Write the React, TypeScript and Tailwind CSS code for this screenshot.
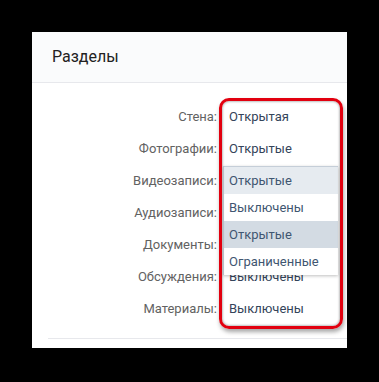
import React from "react";

const rows: { label: string; value: string }[] = [
  { label: "Стена:", value: "Открытая" },
  { label: "Фотографии:", value: "Открытые" },
  { label: "Видеозаписи:", value: "" },
  { label: "Аудиозаписи:", value: "" },
  { label: "Документы:", value: "" },
  { label: "Обсуждения:", value: "Выключены" },
  { label: "Материалы:", value: "Выключены" },
];

const items: { text: string; bg: string }[] = [
  { text: "Открытые", bg: "bg-[#e6ebf0]" },
  { text: "Выключены", bg: "bg-white" },
  { text: "Открытые", bg: "bg-[#d3dbe3]" },
  { text: "Ограниченные", bg: "bg-white" },
];

export default function App() {
  return (
    <div
      className="w-[379px] h-[382px] bg-black pt-[32px] pl-[32px]"
      style={{ fontFamily: "Roboto, 'Open Sans', sans-serif" }}
    >
      <div className="relative w-[315px] h-[316px] bg-white flex flex-col">
        <div className="h-[51px] bg-[#fafbfc] border-b border-[#e7e8ec] flex items-center pl-[20px] text-[16px] text-[#222]">
          Разделы
        </div>
        <div className="flex flex-col pt-[18px] pb-[13px]">
          {rows.map((r) => (
            <div key={r.label} className="h-[32px] flex items-center text-[13px]">
              <div className="w-[185px] text-right text-[#626262]">{r.label}</div>
              <div className="pl-[12px] text-[#34445a]">{r.value}</div>
            </div>
          ))}
        </div>
        <div className="ml-[16px] h-px bg-[#e7e8ec]" />

        <div className="absolute left-[191px] top-[134px] w-[115px] border-t border-l border-[#c5ced8] shadow-[0_1px_3px_rgba(0,0,0,0.25)] flex flex-col">
          {items.map((it, i) => (
            <div
              key={i}
              className={`h-[27px] flex items-center pl-[5px] text-[13px] text-[#3f5671] ${it.bg}`}
            >
              {it.text}
            </div>
          ))}
        </div>

        <div className="absolute left-[187px] top-[66px] w-[124px] h-[231px] rounded-[10px] border-[3px] border-[#e2000f] shadow-[1px_3px_4px_rgba(0,0,0,0.35),inset_0_0_2px_1px_rgba(0,0,0,0.25)]" />
      </div>
    </div>
  );
}
